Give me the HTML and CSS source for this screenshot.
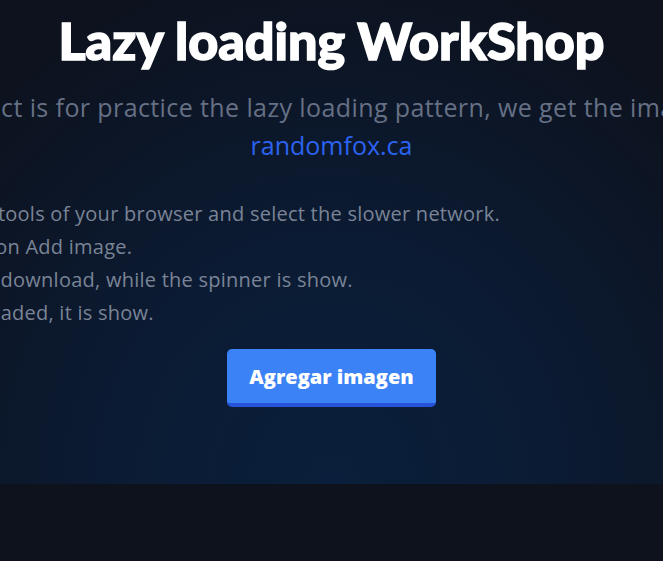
FILE: index.html
```html
<!DOCTYPE html>
<html lang="en">
<head>
<meta charset="utf-8">
<title>Lazy loading WorkShop</title>
<link rel="stylesheet" href="styles.css">
</head>
<body>
<main class="hero">
  <div class="hero-inner">
    <h1 class="title">Lazy loading WorkShop</h1>
    <p class="lead">This project is for practice the lazy loading pattern, we get the images from<br><a class="link" href="#">randomfox.ca</a></p>
    <ol class="steps">
      <li>1. Open the devtools of your browser and select the slower network.</li>
      <li>2. Click the button Add image.</li>
      <li>3. An image will download, while the spinner is show.</li>
      <li>4. The images loaded, it is show.</li>
    </ol>
    <button class="btn" type="button">Agregar imagen</button>
  </div>
</main>
<section class="gallery"></section>
</body>
</html>
```
FILE: styles.css
```css
html, body {
  margin: 0;
  padding: 0;
}
body {
  background: #0e121d;
  font-family: "Open Sans", "Noto Sans", sans-serif;
  overflow: hidden;
}
.hero {
  height: 484px;
  display: flex;
  justify-content: center;
  overflow: hidden;
  background: radial-gradient(ellipse 75% 110% at 50% 100%, #0a1f3b 0%, #0b1b33 45%, #0d121e 100%);
}
.hero-inner {
  flex: 0 0 1100px;
  width: 1100px;
  display: flex;
  flex-direction: column;
  align-items: center;
  padding-top: 9px;
}
.title {
  margin: 0;
  font-family: "Lato", sans-serif;
  font-weight: 900;
  font-size: 52px;
  line-height: 62px;
  color: #ffffff;
  -webkit-text-stroke: 1.5px #ffffff;
  text-align: center;
}
.lead {
  margin: 17px 0 0;
  font-size: 25px;
  line-height: 38px;
  letter-spacing: 0.4px;
  color: #667085;
  text-align: center;
}
.link {
  color: #2b63f0;
  text-decoration: none;
  letter-spacing: 0;
}
.steps {
  align-self: flex-start;
  list-style: none;
  margin: 33px 0 0 65px;
  padding: 0;
  font-size: 20px;
  line-height: 33px;
  letter-spacing: 0.25px;
  color: #7a8497;
}
.btn {
  margin-top: 20px;
  width: 209px;
  height: 58px;
  border: 0;
  border-bottom: 4px solid #2753da;
  border-radius: 5px;
  background: #3b82f6;
  color: #ffffff;
  font-family: "Open Sans", sans-serif;
  font-weight: 800;
  font-size: 20px;
  padding-top: 2px;
  cursor: pointer;
}
.gallery {
  height: 77px;
  background: #0e121d;
}
```
